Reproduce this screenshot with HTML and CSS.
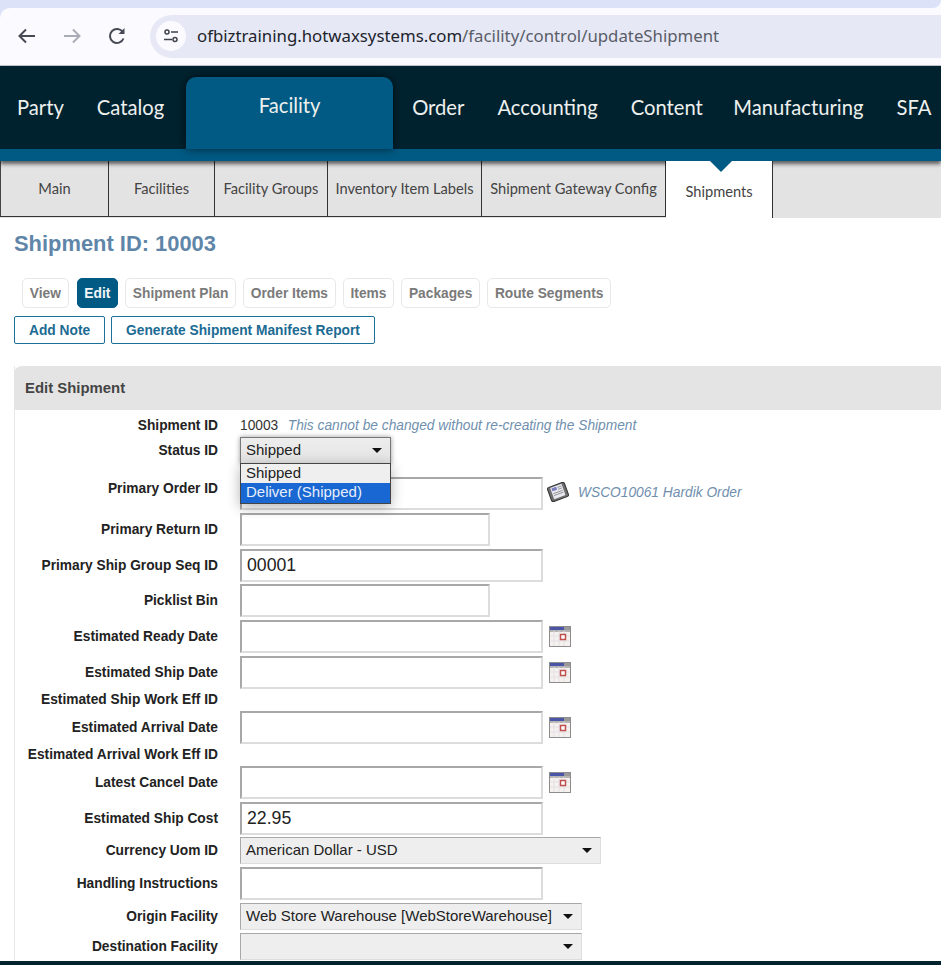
FILE: index.html
```html
<!DOCTYPE html>
<html lang="en">
<head>
    <meta charset="UTF-8">
    <meta name="viewport" content="width=device-width, initial-scale=1.0">
    <title>Edit Shipment</title>
    <link rel="stylesheet" href="styles.css">
</head>
<body>
    <div class="chrome">
        <div class="chrome-strip"></div>
        <div class="toolbar">
            <svg class="tool-icon" viewBox="0 0 24 24"><path d="M20 12H5M11 5.5 4.5 12l6.5 6.5" fill="none" stroke="#474a55" stroke-width="2"/></svg>
            <svg class="tool-icon" viewBox="0 0 24 24"><path d="M4 12h15M13 5.5l6.5 6.5-6.5 6.5" fill="none" stroke="#a9abb5" stroke-width="2"/></svg>
            <svg class="tool-icon" viewBox="0 0 24 24"><path d="M18.5 14.5a7 7 0 1 1-.6-6.2" fill="none" stroke="#474a55" stroke-width="2"/><path d="M19.5 4v6h-6z" fill="#474a55"/></svg>
            <div class="url-pill">
                <span class="site-icon">
                    <svg viewBox="0 0 16 16" width="16" height="16"><g fill="none" stroke="#3f424c" stroke-width="1.5"><circle cx="4" cy="4" r="2"/><path d="M8 4h7M1 11.500h8"/><circle cx="12" cy="11.500" r="2"/></g></svg>
                </span>
                <span class="url-text"><span class="url-host">ofbiztraining.hotwaxsystems.com</span>/facility/control/updateShipment</span>
            </div>
        </div>
    </div>

    <nav class="main-nav">
        <a class="nav-item">Party</a>
        <a class="nav-item">Catalog</a>
        <a class="nav-item active">Facility</a>
        <a class="nav-item">Order</a>
        <a class="nav-item">Accounting</a>
        <a class="nav-item tight">Content</a>
        <a class="nav-item">Manufacturing</a>
        <a class="nav-item">SFA</a>
    </nav>

    <div class="sub-nav">
        <a class="sub-item w-main">Main</a>
        <a class="sub-item w-facilities">Facilities</a>
        <a class="sub-item w-groups">Facility Groups</a>
        <a class="sub-item w-labels">Inventory Item Labels</a>
        <a class="sub-item w-gateway">Shipment Gateway Config</a>
        <a class="sub-item selected">Shipments</a>
    </div>

    <h1 class="page-title">Shipment ID: 10003</h1>

    <div class="pill-row">
        <a class="pill">View</a>
        <a class="pill current">Edit</a>
        <a class="pill">Shipment Plan</a>
        <a class="pill">Order Items</a>
        <a class="pill">Items</a>
        <a class="pill">Packages</a>
        <a class="pill">Route Segments</a>
    </div>
    <div class="action-row">
        <a class="action">Add Note</a>
        <a class="action">Generate Shipment Manifest Report</a>
    </div>

    <section class="panel">
        <h2 class="panel-title">Edit Shipment</h2>
        <form class="panel-body">
            <div class="row text-row">
                <label>Shipment ID</label>
                <span class="value">10003</span>
                <em class="hint">This cannot be changed without re-creating the Shipment</em>
            </div>
            <div class="row status-row">
                <label>Status ID</label>
                <div class="select open">Shipped<i class="caret"></i></div>
                <ul class="dropdown">
                    <li>Shipped</li>
                    <li class="highlighted">Deliver (Shipped)</li>
                </ul>
            </div>
            <div class="row order-row">
                <label>Primary Order ID</label>
                <input class="field wide" type="text">
                <svg class="book-icon" viewBox="0 0 24 20">
                    <g transform="rotate(-20 12 10)">
                        <rect x="3" y="2.500" width="18" height="15" rx="2" fill="#6e6e6e" stroke="#333"/>
                        <rect x="6" y="3.500" width="12" height="12" fill="#e8e8f0"/>
                        <rect x="7" y="4.500" width="5" height="3" fill="#7a7ebc"/>
                        <path d="M13 5.500h4M13 7.500h4M7 10h10M7 12h10" stroke="#888" stroke-width=".8"/>
                    </g>
                </svg>
                <em class="lookup">WSCO10061 Hardik Order</em>
            </div>
            <div class="row"><label>Primary Return ID</label><input class="field short" type="text"></div>
            <div class="row"><label>Primary Ship Group Seq ID</label><input class="field wide" type="text" value="00001"></div>
            <div class="row"><label>Picklist Bin</label><input class="field short" type="text"></div>
            <div class="row">
                <label>Estimated Ready Date</label>
                <input class="field wide" type="text">
                <svg class="cal-icon" viewBox="0 0 22 21"><use href="#cal"/></svg>
            </div>
            <div class="row">
                <label>Estimated Ship Date</label>
                <input class="field wide" type="text">
                <svg class="cal-icon" viewBox="0 0 22 21"><use href="#cal"/></svg>
            </div>
            <div class="row plain-row"><label>Estimated Ship Work Eff ID</label></div>
            <div class="row">
                <label>Estimated Arrival Date</label>
                <input class="field wide" type="text">
                <svg class="cal-icon" viewBox="0 0 22 21"><use href="#cal"/></svg>
            </div>
            <div class="row plain-row"><label>Estimated Arrival Work Eff ID</label></div>
            <div class="row">
                <label>Latest Cancel Date</label>
                <input class="field wide" type="text">
                <svg class="cal-icon" viewBox="0 0 22 21"><use href="#cal"/></svg>
            </div>
            <div class="row cost-row"><label>Estimated Ship Cost</label><input class="field wide" type="text" value="22.95"></div>
            <div class="row select-row">
                <label>Currency Uom ID</label>
                <div class="select currency">American Dollar - USD<i class="caret"></i></div>
            </div>
            <div class="row"><label>Handling Instructions</label><input class="field wide" type="text"></div>
            <div class="row select-row">
                <label>Origin Facility</label>
                <div class="select facility">Web Store Warehouse [WebStoreWarehouse]<i class="caret"></i></div>
            </div>
            <div class="row select-row">
                <label>Destination Facility</label>
                <div class="select facility"><i class="caret"></i></div>
            </div>
        </form>
    </section>

    <div class="bottom-bar"></div>

    <svg class="defs" width="0" height="0">
        <symbol id="cal" viewBox="0 0 22 21">
            <rect x=".5" y=".5" width="21" height="20" fill="#f4f1ee" stroke="#8d8d8d"/>
            <rect x="1" y="1" width="14" height="3" fill="#4a55a8"/>
            <rect x="15" y="1" width="6" height="3" fill="#999"/>
            <path d="M1 5h20" stroke="#777"/>
            <path d="M5 5v15M10 5v15M15 5v15M1 10h20M1 15h20" stroke="#e6dfe6"/>
            <rect x="11.500" y="8.500" width="5" height="5" fill="#fff" stroke="#c0504d" stroke-width="1.500"/>
        </symbol>
    </svg>
</body>
</html>
```

FILE: styles.css
```css
* {
    box-sizing: border-box;
}

html, body {
    margin: 0;
    height: 965px;
    overflow: hidden;
    background-color: #fff;
    font-family: "Liberation Sans", Arial, sans-serif;
}

/* browser bar */
.chrome {
    background: linear-gradient(90deg, #dce3f9 50%, #fbfbff 50%);
}

.chrome-strip {
    height: 8px;
    background-color: #dce3f9;
    border-bottom-right-radius: 8px;
}

.toolbar {
    display: flex;
    align-items: center;
    height: 58px;
    padding: 0 0 1px 15px;
    background-color: #fbfbff;
    border-top-left-radius: 10px;
    border-bottom: 1px solid #c4c7cf;
}

.tool-icon {
    flex: none;
    width: 24px;
    height: 24px;
    margin-right: 21px;
}

.url-pill {
    display: flex;
    align-items: center;
    flex: 1;
    height: 43px;
    padding-left: 6px;
    background-color: #e6e9f5;
    border-radius: 22px 0 0 22px;
}

.site-icon {
    display: flex;
    align-items: center;
    justify-content: center;
    width: 30px;
    height: 30px;
    border-radius: 50%;
    background-color: #fbfbff;
}

.url-text {
    margin: 0 0 2px 11px;
    font-family: "Noto Sans", sans-serif;
    font-size: 16.800px;
    color: #5a5d68;
    white-space: nowrap;
}

.url-host {
    color: #20232b;
}

/* main menu */
.main-nav {
    display: flex;
    align-items: flex-start;
    height: 95px;
    padding-left: 0.5px;
    background-color: #00222f;
    border-bottom: 12px solid #005a84;
    box-shadow: 0 3px 4px rgba(0, 0, 0, 0.6);
    position: relative;
}

.nav-item {
    flex: none;
    padding: 29px 16.500px 0;
    font-family: Lato, sans-serif;
    font-size: 20.200px;
    color: #eef0ee;
}

.nav-item.tight {
    padding-right: 14px;
}

.nav-item.active {
    width: 207px;
    height: 72px;
    margin: 11px 2.500px 0 5.500px;
    padding-top: 16px;
    text-align: center;
    background-color: #005a84;
    border-radius: 10px 10px 0 0;
    box-shadow: 0 0 10px rgba(0, 0, 0, 0.6);
}

/* sub menu */
.sub-nav {
    display: flex;
    height: 57px;
    background-color: #e3e3e3;
}

.sub-item {
    display: flex;
    align-items: center;
    justify-content: center;
    height: 56px;
    font-family: Lato, sans-serif;
    font-size: 14.650px;
    color: #444;
    border-right: 1.500px solid #333;
    border-bottom: 1.500px solid #333;
    white-space: nowrap;
}

.w-main {
    width: 109px;
    border-left: 1.500px solid #444;
}

.w-facilities {
    width: 106px;
}

.w-groups {
    width: 113px;
}

.w-labels {
    width: 154px;
}

.w-gateway {
    width: 184px;
}

.sub-item.selected {
    position: relative;
    width: 107px;
    height: 57px;
    padding-top: 3px;
    background-color: #fff;
    border-bottom: none;
}

.sub-item.selected::before {
    content: "";
    position: absolute;
    top: 0;
    left: 44px;
    border-style: solid;
    border-width: 11px 11px 0;
    border-color: #005a84 transparent transparent;
}

.page-title {
    margin: 13px 0 0 14px;
    font-size: 21.900px;
    line-height: 26px;
    color: #5f86a8;
}

/* buttons */
.pill-row {
    display: flex;
    gap: 7px;
    margin: 21px 0 0 22px;
}

.pill {
    padding: 0 6.750px;
    height: 30px;
    line-height: 30px;
    font-size: 13.750px;
    font-weight: bold;
    color: #7a7a7a;
    background-color: #fff;
    border: 1px solid #e8e8e8;
    border-radius: 5px;
}

.pill.current {
    margin-left: 1px;
    color: #f2f6f8;
    background-color: #005a84;
    border-color: #005a84;
}

.action-row {
    display: flex;
    gap: 6px;
    margin: 8px 0 0 14px;
}

.action {
    height: 28px;
    padding: 0 14px;
    line-height: 28px;
    font-size: 13.750px;
    font-weight: bold;
    color: #1c6b93;
    border: 1px solid #1c6f98;
    border-radius: 2px;
}

/* form panel */
.panel {
    position: relative;
    margin: 22px 0 0 14px;
    border-left: 1px solid #e8e8e8;
}

.panel-title {
    margin: 0 0 0 -1px;
    padding-left: 11px;
    height: 44px;
    line-height: 44px;
    font-size: 14.900px;
    color: #444;
    background-color: #e4e4e4;
    border-top-left-radius: 8px;
}

.panel-body {
    padding-top: 5px;
}

.row {
    display: flex;
    align-items: center;
    position: relative;
    height: 35.750px;
}

.row label {
    flex: none;
    width: 203px;
    margin-right: 22px;
    text-align: right;
    font-size: 13.750px;
    font-weight: bold;
    color: #222;
}

.text-row {
    height: 20.500px;
}

.status-row {
    height: 29px;
}

.order-row {
    height: 47px;
}

.order-row .field {
    margin-top: 10px;
}

.plain-row {
    height: 19.500px;
    padding-bottom: 1px;
}

.cost-row {
    height: 35px;
}

.select-row {
    height: 30px;
}

.value {
    font-size: 13.750px;
    color: #333;
}

.hint {
    margin-left: 9.500px;
    font-size: 13.750px;
    color: #6f8fae;
}

.field {
    height: 33px;
    padding: 0 5px;
    font-family: "Liberation Sans", Arial, sans-serif;
    font-size: 17.700px;
    color: #222;
    background-color: #fff;
    border: 2px solid;
    border-color: #a8a8a8 #dcdcdc #dcdcdc #a8a8a8;
}

.wide {
    width: 303px;
}

.short {
    width: 250px;
}

.cal-icon {
    width: 22px;
    height: 21px;
    margin-left: 6px;
}

.book-icon {
    width: 24px;
    height: 20px;
    margin: 7px 0 0 3px;
}

.lookup {
    margin: 9px 0 0 8px;
    font-size: 13.750px;
    color: #6f8fae;
}

.select {
    position: relative;
    height: 27px;
    padding-left: 5px;
    line-height: 24px;
    font-size: 15px;
    color: #222;
    background-color: #eee;
    border: 1.500px solid;
    border-color: #a8a8a8 #ddd #ddd #a8a8a8;
    white-space: nowrap;
}

.select.open {
    width: 151px;
    background: linear-gradient(#ededed, #e4e4e4);
    border: 1px solid #777;
    box-shadow: 0 0 5px rgba(0, 0, 0, 0.4);
}

.currency {
    width: 361px;
}

.facility {
    width: 342px;
}

.caret {
    position: absolute;
    top: 10px;
    right: 8px;
    border-style: solid;
    border-width: 5px 5px 0;
    border-color: #111 transparent transparent;
}

.dropdown {
    position: absolute;
    z-index: 5;
    top: 27px;
    left: 225px;
    width: 151px;
    margin: 0;
    padding: 0;
    list-style: none;
    font-size: 15px;
    color: #222;
    background-color: #efefef;
    border: 1px solid #444;
    box-shadow: 0 3px 12px rgba(0, 0, 0, 0.3);
}

.dropdown li {
    height: 19.500px;
    padding-left: 5px;
    line-height: 17.500px;
}

.dropdown .highlighted {
    color: #e8eefa;
    background-color: #1967d2;
}

.bottom-bar {
    position: absolute;
    top: 961px;
    left: 0;
    width: 100%;
    height: 4px;
    background-color: #00222f;
}

.defs {
    position: absolute;
}
```
